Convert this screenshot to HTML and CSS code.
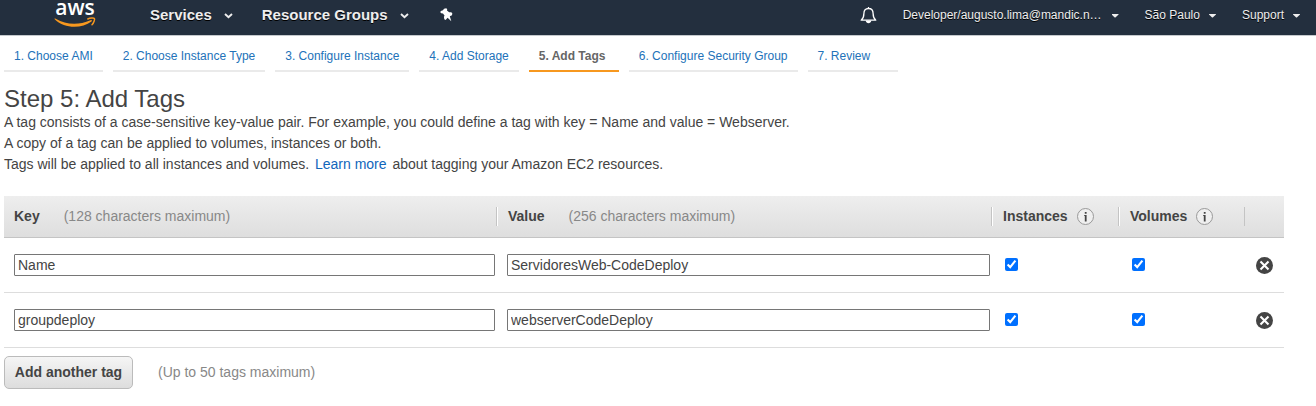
FILE: index.html
```html
<!DOCTYPE html>
<html lang="en">
<head>
<meta charset="utf-8">
<title>Step 5: Add Tags</title>
<link rel="stylesheet" href="styles.css">
</head>
<body>
<header class="topbar">
  <div class="logo">
    <span class="logo-text">aws</span>
    <svg class="logo-smile" width="42" height="12" viewBox="0 0 42 12"><path d="M.4 1.800C.6 1.300 1.100 1.300 1.700 1.700C12.500 8 24.500 8.300 36.500 3.200C37.700 2.700 38.500 3.700 37.500 4.500C27.500 12 10.500 11.800.9 2.600Z" fill="#f7981f"/><path d="M33.800 2C36 .9 39.800.8 40.400 1.500C41 2.300 39.800 6 38 7.800" fill="none" stroke="#f7981f" stroke-width="1.500" stroke-linecap="round"/></svg>
  </div>
  <nav class="main-nav">
    <a class="nav-item">Services<svg width="9" height="6" viewBox="0 0 9 6"><path d="M1 1L4.500 4.300L8 1" fill="none" stroke="#eee" stroke-width="1.900"/></svg></a>
    <a class="nav-item">Resource Groups<svg width="9" height="6" viewBox="0 0 9 6"><path d="M1 1L4.500 4.300L8 1" fill="none" stroke="#eee" stroke-width="1.900"/></svg></a>
    <svg class="pin" width="13" height="14" viewBox="0 0 13 14"><path d="M4 .8L6.300.3L7.200 1.200L7 2.500L9.200 4.300L11.200 4.300L12.300 5.300L12 7.300L9.800 8.300L11.300 13.300L7.600 9.700L5.600 12L4.300 11.300L3.900 8.800L4.600 7.800L3 5.400L1.200 5.300L.3 4.300L.8 3L3 2.200Z" fill="#fff"/></svg>
  </nav>
  <div class="user-nav">
    <svg class="bell" width="17" height="18" viewBox="0 0 17 18"><path d="M8.500 1V2.500M1.200 14.200C3.400 12.400 3.900 11 3.900 7.500C3.900 4.300 5.500 2.500 8.500 2.500S13.100 4.300 13.100 7.500C13.100 11 13.600 12.400 15.800 14.200Z" fill="none" stroke="#fff" stroke-width="1.300" stroke-linejoin="round"/><path d="M5.700 14.500H11.300C11 18.200 6 18.200 5.700 14.500Z" fill="#fff"/></svg>
    <a class="user-item account">Developer/augusto.lima@mandic.n…<i class="caret"></i></a>
    <a class="user-item region">São Paulo<i class="caret"></i></a>
    <a class="user-item support">Support<i class="caret"></i></a>
  </div>
</header>
<nav class="steps">
  <a class="step">1. Choose AMI</a>
  <a class="step">2. Choose Instance Type</a>
  <a class="step">3. Configure Instance</a>
  <a class="step">4. Add Storage</a>
  <a class="step active">5. Add Tags</a>
  <a class="step">6. Configure Security Group</a>
  <a class="step">7. Review</a>
</nav>
<main class="content">
  <h1>Step 5: Add Tags</h1>
  <p>A tag consists of a case-sensitive key-value pair. For example, you could define a tag with key = Name and value = Webserver.</p>
  <p>A copy of a tag can be applied to volumes, instances or both.</p>
  <p>Tags will be applied to all instances and volumes. <a class="learn">Learn more</a> about tagging your Amazon EC2 resources.</p>
  <section class="tags">
    <div class="row head">
      <div class="cell">Key<span class="hint">(128 characters maximum)</span></div>
      <div class="cell">Value<span class="hint">(256 characters maximum)</span></div>
      <div class="cell">Instances<svg class="info" width="17" height="17" viewBox="0 0 17 17"><circle cx="8.500" cy="8.500" r="8" fill="#efefef" stroke="#999"/><path d="M7.800 4H9.600V5.800H7.800ZM7.200 7H9.600V13.500H7.800V8H7.200Z" fill="#444"/></svg></div>
      <div class="cell">Volumes<svg class="info" width="17" height="17" viewBox="0 0 17 17"><circle cx="8.500" cy="8.500" r="8" fill="#efefef" stroke="#999"/><path d="M7.800 4H9.600V5.800H7.800ZM7.200 7H9.600V13.500H7.800V8H7.200Z" fill="#444"/></svg></div>
      <div class="cell"></div>
    </div>
    <div class="row">
      <input class="field" type="text" value="Name">
      <input class="field wide" type="text" value="ServidoresWeb-CodeDeploy">
      <input class="check" type="checkbox" checked>
      <input class="check" type="checkbox" checked>
      <svg class="remove" width="17" height="17" viewBox="0 0 17 17"><circle cx="8.500" cy="8.500" r="8.500" fill="#444"/><path d="M4.500 4.500L12.500 12.500M12.500 4.500L4.500 12.500" stroke="#fff" stroke-width="2.100"/></svg>
    </div>
    <div class="row">
      <input class="field" type="text" value="groupdeploy">
      <input class="field wide" type="text" value="webserverCodeDeploy">
      <input class="check" type="checkbox" checked>
      <input class="check" type="checkbox" checked>
      <svg class="remove" width="17" height="17" viewBox="0 0 17 17"><circle cx="8.500" cy="8.500" r="8.500" fill="#444"/><path d="M4.500 4.500L12.500 12.500M12.500 4.500L4.500 12.500" stroke="#fff" stroke-width="2.100"/></svg>
    </div>
  </section>
  <div class="actions">
    <button class="add">Add another tag</button>
    <span class="limit">(Up to 50 tags maximum)</span>
  </div>
</main>
</body>
</html>
```
FILE: styles.css
```css
* { box-sizing: border-box; }
body { margin: 0; background: #fff; color: #444; font: 14px/21px "Liberation Sans", Arial, sans-serif; overflow: hidden; }
.topbar { display: flex; height: 36px; background: #232f3e; border-bottom: 1px solid #c5c9cd; color: #eee; text-shadow: 0 1px 0 #000; }
.logo { width: 42px; margin-left: 54px; display: flex; flex-direction: column; align-items: center; text-shadow: none; }
.logo-text { font: 600 21px/14px "Open Sans", sans-serif; color: #fff; height: 17px; }
.logo-smile { display: block; }
.main-nav { display: flex; align-items: flex-start; margin-left: 54px; }
.nav-item { display: flex; align-items: center; font-size: 15px; line-height: 30px; font-weight: bold; margin-right: 29px; }
.nav-item svg { margin: 2px 0 0 12px; }
.pin { margin: 8px 0 0 2px; }
.user-nav { display: flex; align-items: flex-start; margin-left: auto; padding-right: 16px; font-size: 12px; line-height: 31px; }
.bell { margin: 6px 26px 0 0; }
.user-item { display: flex; align-items: center; }
.region { margin-left: 26px; }
.support { margin-left: 26px; }
.account .caret { margin-left: 10px; }
.caret { width: 7px; height: 4px; margin-left: 9px; background: #eee; clip-path: polygon(0 0, 100% 0, 100% 25%, 55% 100%, 45% 100%, 0 25%); }
.steps { display: flex; gap: 10px; padding: 9px 4px 0; font-size: 12px; line-height: 22px; }
.step { min-width: 90px; height: 27px; padding: 0 10px; border-bottom: 2px solid #eaeaea; color: #2272b9; white-space: nowrap; }
.step.active { border-color: #f7981f; color: #666; font-weight: bold; }
.content { padding: 13px 4px 0; }
h1 { margin: 0; font-size: 24px; line-height: 27px; font-weight: normal; }
p { margin: 0; }
.learn { color: #1166bb; margin: 0 2px; }
.tags { width: 1280px; margin-top: 21px; }
.row { display: grid; grid-template-columns: 493px 495px 127px 126px 39px; height: 55px; align-items: center; border-bottom: 1px solid #ddd; }
.head { grid-template-columns: 494px 495px 127px 126px 38px; height: 42px; background: linear-gradient(#eee, #dedede); border-color: #c4c4c4; font-weight: bold; }
.cell { display: flex; align-items: center; height: 19px; padding-left: 10px; border-right: 1px solid #fff; box-shadow: inset -1px 0 #c4c4c4; }
.cell:nth-child(4) { border-right-color: transparent; }
.cell:last-child { border: 0; box-shadow: none; }
.hint { font-weight: normal; color: #888; margin-left: 24px; }
.info { margin-left: 9px; }
.field { height: 22px; margin: 0 0 0 10px; width: 481px; padding: 1px 3px; border: 1px solid #767676; border-radius: 1px; font: inherit; color: #444; background: #fff; }
.field.wide { width: 483px; }
.check { width: 13px; height: 13px; margin: 0 0 2px 13px; accent-color: #0070ff; }
.remove { margin: 1px 0 0 11px; }
.actions { display: flex; align-items: center; margin-top: 8px; }
.add { width: 129px; height: 33px; padding: 0 0 2px; border: 1px solid #bbb; border-radius: 5px; background: linear-gradient(#f5f5f5, #ddd); font: bold 14px "Liberation Sans", Arial, sans-serif; color: #444; }
.limit { margin-left: 25px; color: #888; }
```
